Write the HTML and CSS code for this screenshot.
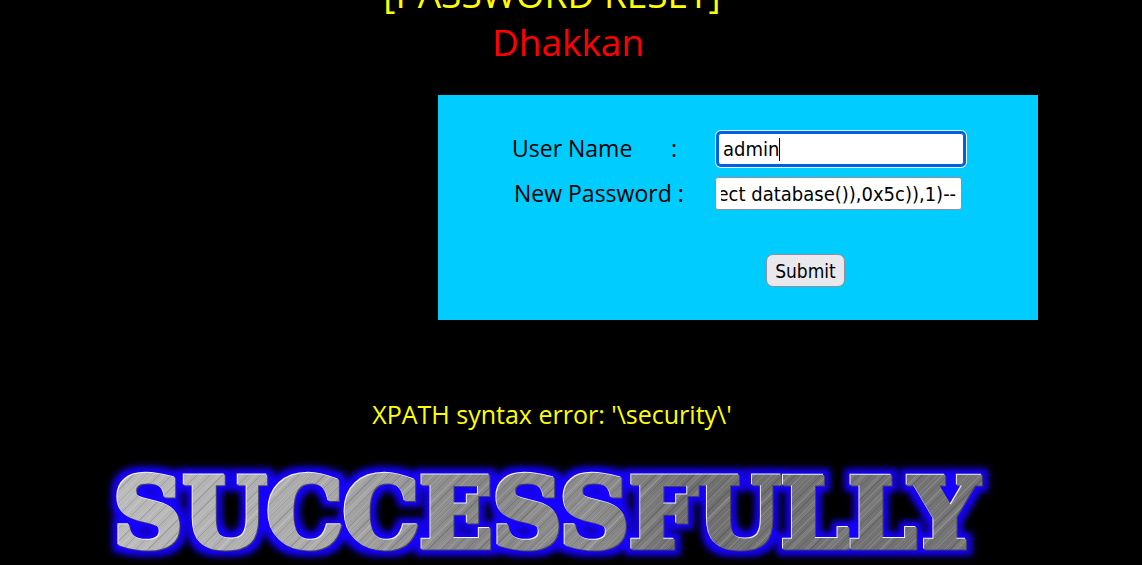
FILE: index.html
```
<!DOCTYPE html>
<html lang="en">
<head>
<meta charset="utf-8">
<title>Password Reset</title>
<link rel="stylesheet" href="styles.css">
</head>
<body>
<svg class="defs" width="0" height="0" aria-hidden="true">
  <filter id="steel" x="-5%" y="-20%" width="110%" height="140%" color-interpolation-filters="sRGB">
    <feMorphology in="SourceAlpha" operator="dilate" radius="6" result="wide"/>
    <feGaussianBlur in="wide" stdDeviation="3" result="soft"/>
    <feFlood flood-color="#1600ff"/>
    <feComposite in2="soft" operator="in" result="glow"/>
    <feOffset in="SourceAlpha" dx="-1" dy="-1" result="up"/>
    <feFlood flood-color="#f2f2f8"/>
    <feComposite in2="up" operator="in" result="light"/>
    <feOffset in="SourceAlpha" dx="1" dy="1" result="down"/>
    <feFlood flood-color="#44445c"/>
    <feComposite in2="down" operator="in" result="dark"/>
    <feMerge>
      <feMergeNode in="glow"/>
      <feMergeNode in="dark"/>
      <feMergeNode in="light"/>
      <feMergeNode in="SourceGraphic"/>
    </feMerge>
  </filter>
</svg>
<header class="header">
  <h1 class="title">[PASSWORD RESET]</h1>
  <p class="welcome">Dhakkan</p>
</header>
<form class="panel">
  <div class="row">
    <label class="label" for="uname"><span class="name">User Name</span><span>:</span></label>
    <span class="field"><input class="input focused" id="uname" type="text" value="admin"><span class="caret"></span></span>
  </div>
  <div class="row">
    <label class="label second" for="passwd"><span>New Password :</span></label>
    <span class="field"><input class="input" id="passwd" type="text" value="' and updatexml(1,concat(0x5c,(select database()),0x5c)),1)--"></span>
  </div>
  <button class="submit" type="button">Submit</button>
</form>
<p class="error">XPATH syntax error: '\security\'</p>
<div class="banner"><span class="metal">SUCCESSFULLY</span></div>
<script src="main.js"></script>
</body>
</html>
```
FILE: styles.css
```
* { box-sizing: border-box; }
body {
  margin: 0;
  background: #000;
  font-family: "Open Sans", "Noto Sans", sans-serif;
  overflow: hidden;
}
.defs { position: absolute; }
.header {
  margin-top: -30px;
  padding-right: 38px;
  text-align: center;
  font-size: 37px;
  line-height: 48px;
}
.title { margin: 0; font-size: 37px; font-weight: 400; color: #ff0; }
.welcome { margin: 0; padding-left: 32px; color: #f00; }
.panel {
  width: 600px;
  max-width: 100%;
  margin: 29px 104px 0 auto;
  padding: 31px 72px 33px 74px;
  background: #0cf;
}
.row { display: flex; align-items: center; height: 45px; }
.label {
  display: flex;
  width: 203px;
  padding-bottom: 2px;
  line-height: 32px;
  white-space: pre;
  font-size: 23px;
}
.name { width: 159px; }
.second { padding-left: 2px; }
.field { position: relative; display: flex; }
.input {
  width: 247px;
  height: 33px;
  padding: 0 5px;
  border: 1px solid #8f8f9d;
  border-radius: 3px;
  outline: 0;
  background: #fff;
  color: #000;
  font: 20px "DejaVu Sans Condensed", "DejaVu Sans", sans-serif;
}
.focused {
  width: 246px;
  height: 32px;
  margin-left: 3px;
  padding: 0 4px;
  border-color: #0060df;
  box-shadow: 0 0 0 2px #0060df, 0 0 0 3px #e6f8ff;
}
.caret {
  position: absolute;
  left: 64px;
  top: 5px;
  width: 1px;
  height: 23px;
  background: #000;
}
.submit {
  display: block;
  width: 79px;
  height: 33px;
  margin: 38px 0 0 254px;
  padding: 0;
  border: 1px solid #8f8f9d;
  border-radius: 7px;
  background: #e9e9ed;
  color: #000;
  font: 19px "DejaVu Sans Condensed", "DejaVu Sans", sans-serif;
}
.error {
  margin: 78px 38px 0 0;
  text-align: center;
  font-size: 25px;
  line-height: 32px;
  color: #ff0;
}
.banner {
  margin: 28px 50px 0 0;
  text-align: center;
  font: bold 96px/112px "DejaVu Serif", serif;
}
.metal {
  display: inline-block;
  padding: 0 8px;
  background:
    repeating-linear-gradient(135deg, rgba(255,255,255,.12) 0 1px, transparent 1px 4px, rgba(0,0,0,.12) 4px 5px, transparent 5px 9px),
    repeating-linear-gradient(135deg, rgba(255,255,255,.08) 0 3px, transparent 3px 13px),
    linear-gradient(100deg, #bcbcbc 0, #a9a9a9 25%, #858585 42%, #8d8d8d 55%, #6f6f6f 65%, #757575 100%);
  -webkit-background-clip: text;
  background-clip: text;
  color: transparent;
  -webkit-text-stroke: 5px transparent;
  filter: url(#steel);
}
```
FILE: main.js
```
const field = document.getElementById("passwd");
field.scrollLeft = field.scrollWidth;
```
